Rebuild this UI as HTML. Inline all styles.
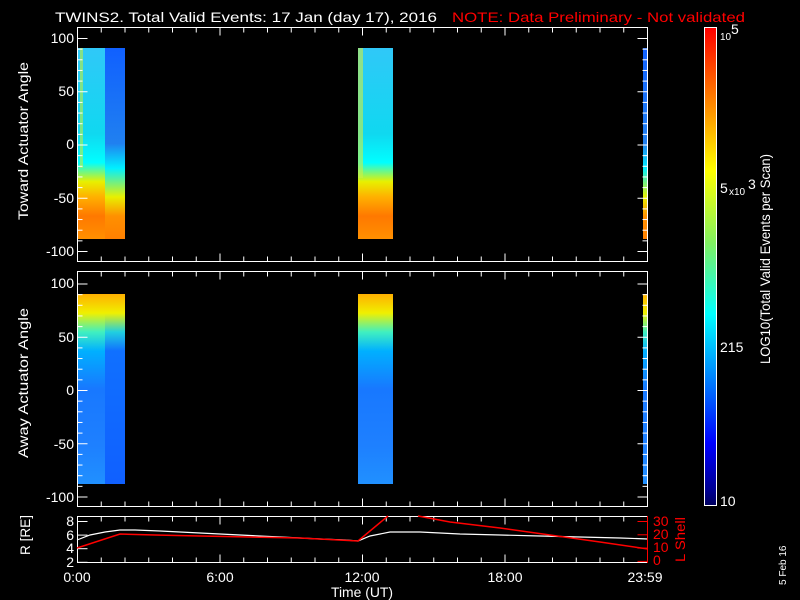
<!DOCTYPE html>
<html><head><meta charset="utf-8"><style>
html,body{margin:0;padding:0;background:#000;width:800px;height:600px;overflow:hidden}
svg{display:block;font-family:"Liberation Sans",sans-serif}
</style></head><body>
<svg id="s" width="800" height="600" viewBox="0 0 800 600" xmlns="http://www.w3.org/2000/svg">
<defs>
<linearGradient id="pA" x1="0" y1="48" x2="0" y2="239" gradientUnits="userSpaceOnUse">
<stop offset="0" stop-color="#30c8f8"/><stop offset="0.45" stop-color="#10d8f0"/><stop offset="0.6" stop-color="#00ffff"/><stop offset="0.7" stop-color="#e8f000"/><stop offset="0.78" stop-color="#ffb000"/><stop offset="0.88" stop-color="#ff7800"/><stop offset="1" stop-color="#ff9000"/></linearGradient>
<linearGradient id="pB" x1="0" y1="48" x2="0" y2="239" gradientUnits="userSpaceOnUse">
<stop offset="0" stop-color="#1060ff"/><stop offset="0.5" stop-color="#2080f0"/><stop offset="0.63" stop-color="#00f0ff"/><stop offset="0.78" stop-color="#e8f000"/><stop offset="0.88" stop-color="#ff9000"/><stop offset="1" stop-color="#ff8000"/></linearGradient>
<linearGradient id="qA" x1="0" y1="294" x2="0" y2="484" gradientUnits="userSpaceOnUse">
<stop offset="0" stop-color="#ffb000"/><stop offset="0.1" stop-color="#f0f000"/><stop offset="0.2" stop-color="#40f0c0"/><stop offset="0.3" stop-color="#00b0ff"/><stop offset="0.5" stop-color="#1878ff"/><stop offset="0.8" stop-color="#1e80ff"/><stop offset="1" stop-color="#2090ff"/></linearGradient>
<linearGradient id="qB" x1="0" y1="294" x2="0" y2="484" gradientUnits="userSpaceOnUse">
<stop offset="0" stop-color="#ffb000"/><stop offset="0.1" stop-color="#f0f000"/><stop offset="0.2" stop-color="#20d0e0"/><stop offset="0.3" stop-color="#1070ff"/><stop offset="1" stop-color="#1060ff"/></linearGradient>
<linearGradient id="cb" x1="0" y1="28" x2="0" y2="505" gradientUnits="userSpaceOnUse">
<stop offset="0" stop-color="#ff0000"/><stop offset="0.15" stop-color="#ff8000"/><stop offset="0.3" stop-color="#ffff00"/><stop offset="0.45" stop-color="#80f060"/><stop offset="0.6" stop-color="#00ffff"/><stop offset="0.72" stop-color="#0090ff"/><stop offset="0.87" stop-color="#0000ff"/><stop offset="0.97" stop-color="#000090"/><stop offset="1" stop-color="#000060"/></linearGradient>
</defs>
<g font-size="14" fill="#fff">
<text x="55" y="22" textLength="382" lengthAdjust="spacingAndGlyphs">TWINS2. Total Valid Events: 17 Jan (day  17), 2016</text>
<text x="452" y="22" fill="#ff0000" textLength="293" lengthAdjust="spacingAndGlyphs">NOTE: Data Preliminary - Not validated</text>
</g>
<!-- data panel 1 -->
<rect x="78" y="48" width="27" height="191" fill="url(#pA)"/>
<rect x="80" y="48" width="3" height="120" fill="#c0f040" opacity="0.6"/>
<rect x="105" y="48" width="20" height="191" fill="url(#pB)"/>
<rect x="358" y="48" width="35" height="191" fill="url(#pA)"/>
<rect x="358" y="48" width="5" height="130" fill="#d0f040" opacity="0.6"/>
<rect x="643" y="48" width="4" height="191" fill="url(#pB)"/>
<!-- data panel 2 -->
<rect x="78" y="294" width="27" height="190" fill="url(#qA)"/>
<rect x="105" y="294" width="20" height="190" fill="url(#qB)"/>
<rect x="358" y="294" width="35" height="190" fill="url(#qA)"/>
<rect x="643" y="294" width="4" height="190" fill="url(#qA)"/>
<!-- colorbar -->
<rect x="705" y="28" width="11" height="477" fill="url(#cb)"/>
<rect x="704.5" y="27.5" width="12" height="478" fill="none" stroke="#fff" stroke-width="1"/>
<g font-size="14" fill="#fff">
<text x="720" y="40" font-size="10">10</text><text x="731" y="34">5</text>
<text x="720" y="193">5</text><text x="729" y="195" font-size="10">x10</text><text x="748" y="189">3</text>
<text x="720" y="352">215</text>
<text x="720" y="506">10</text>
<text transform="translate(770,364) rotate(-90)" textLength="210" lengthAdjust="spacingAndGlyphs">LOG10(Total Valid Events per Scan)</text>
<text transform="translate(28,220) rotate(-90)" textLength="158" lengthAdjust="spacingAndGlyphs">Toward Actuator Angle</text>
<text transform="translate(28,458) rotate(-90)" textLength="150" lengthAdjust="spacingAndGlyphs">Away Actuator Angle</text>
<text transform="translate(30,555) rotate(-90)" textLength="40" lengthAdjust="spacingAndGlyphs">R [RE]</text>
<text transform="translate(685,562) rotate(-90)" fill="#ff0000" textLength="45" lengthAdjust="spacingAndGlyphs">L Shell</text>
<text transform="translate(786,585) rotate(-90)" font-size="10">5 Feb 16</text>
<text x="331" y="597" textLength="62" lengthAdjust="spacingAndGlyphs">Time (UT)</text>
<text x="77" y="582" text-anchor="middle">0:00</text>
<text x="220" y="582" text-anchor="middle">6:00</text>
<text x="362" y="582" text-anchor="middle">12:00</text>
<text x="505" y="582" text-anchor="middle">18:00</text>
<text x="645" y="582" text-anchor="middle">23:59</text>
<g text-anchor="end">
<text x="74" y="43">100</text><text x="74" y="96">50</text><text x="74" y="149">0</text><text x="74" y="203">-50</text><text x="74" y="256">-100</text>
<text x="74" y="288">100</text><text x="74" y="342">50</text><text x="74" y="395">0</text><text x="74" y="449">-50</text><text x="74" y="502">-100</text>
<text x="74" y="526">8</text><text x="74" y="540">6</text><text x="74" y="553">4</text><text x="74" y="567">2</text>
</g>
<g fill="#ff0000">
<text x="653" y="526">30</text><text x="653" y="539">20</text><text x="653" y="552">10</text><text x="653" y="565">0</text>
</g>
</g>
<g id="ax" stroke="#fff" stroke-width="1" fill="none">
<rect x="77.5" y="27.5" width="570" height="234"/>
<rect x="77.5" y="271.5" width="570" height="235"/>
<rect x="77.5" y="516.5" width="570" height="46"/>
</g>
<!-- bottom panel lines -->
<polyline fill="none" stroke="#fff" stroke-width="1.2" points="77,540 90,535 105,532 120,530 135,530 160,531 200,533 240,535 280,537 320,539 345,540 358,541 370,536 390,532 420,532 460,534 500,535 540,536 580,537 620,538 648,539"/>
<polyline fill="none" stroke="#ff0000" stroke-width="1.5" points="77,548 120,534 155,535 200,536 250,537 300,538 358,541 388,516"/>
<polyline fill="none" stroke="#ff0000" stroke-width="1.5" points="418,516 450,522 500,528 550,535 600,542 648,549"/>
<line x1="647.5" y1="516" x2="647.5" y2="563" stroke="#ff0000"/>
</svg>
<script>
var s=document.getElementById('ax'),ns='http://www.w3.org/2000/svg';
function L(x1,y1,x2,y2,c){var l=document.createElementNS(ns,'line');l.setAttribute('x1',x1);l.setAttribute('y1',y1);l.setAttribute('x2',x2);l.setAttribute('y2',y2);if(c)l.setAttribute('stroke',c);s.appendChild(l);}
var P=[[27.5,261.5,144.5],[271.5,506.5,390]];
for(var h=0;h<=24;h++){var x=77.5+h*23.75,m=h%6==0?8:5;
[[27.5,261.5],[271.5,506.5],[516.5,562.5]].forEach(function(p){L(x,p[0],x,p[0]+m);L(x,p[1],x,p[1]-m);});}
P.forEach(function(p){for(var v=-100;v<=100;v+=10){var y=p[2]-v*1.065+0.5,m=v%50==0?10:5;L(77.5,y,77.5+m,y);L(647.5,y,647.5-m,y);}});
for(var r=2;r<=8;r+=2){var y=521+(8-r)*6.8+0.5;L(77.5,y,87.5,y);}
for(var q=0;q<=30;q+=10){var y=521+(30-q)*1.33+0.5;L(647.5,y,637.5,y,'#ff0000');}
</script>
</body></html>
